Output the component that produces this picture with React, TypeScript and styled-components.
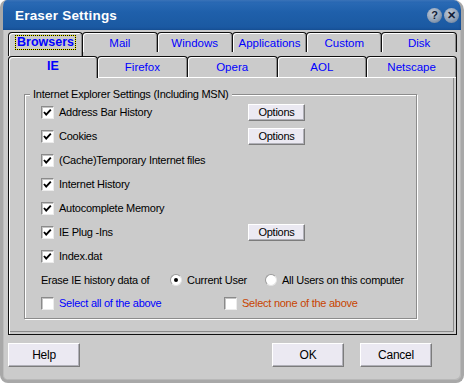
import React from "react";
import styled, { createGlobalStyle } from "styled-components";

const GlobalStyle = createGlobalStyle`
  html, body {
    margin: 0;
    padding: 0;
    background: #ffffff;
  }
  body {
    font-family: "Liberation Sans", Arial, sans-serif;
    font-size: 11px;
    letter-spacing: -0.25px;
    color: #000;
  }
`;

const outerTabs = ["Browsers", "Mail", "Windows", "Applications", "Custom", "Disk"];
const innerTabs = ["IE", "Firefox", "Opera", "AOL", "Netscape"];

const items = [
  { label: "Address Bar History", options: true },
  { label: "Cookies", options: true },
  { label: "(Cache)Temporary Internet files", options: false },
  { label: "Internet History", options: false },
  { label: "Autocomplete Memory", options: false },
  { label: "IE Plug -Ins", options: true },
  { label: "Index.dat", options: false },
];

function CheckBox({ checked }: { checked: boolean }) {
  return (
    <Box>
      {checked && (
        <svg width="11" height="11" viewBox="0 0 11 11">
          <polyline
            points="2,5 4.2,7.6 8.8,2.6"
            fill="none"
            stroke="#000"
            strokeWidth="1.9"
          />
        </svg>
      )}
    </Box>
  );
}

export default function App() {
  return (
    <>
      <GlobalStyle />
      <Window>
        <TitleBar>
          <Title>Eraser Settings</Title>
          <TitleButtons>
            <RoundButton>?</RoundButton>
            <RoundButton>✕</RoundButton>
          </TitleButtons>
        </TitleBar>

        <Body>
          <TabRow>
            {outerTabs.map((t, i) => (
              <Tab key={t} $active={i === 0} $back>
                {i === 0 ? <Focus>{t}</Focus> : t}
              </Tab>
            ))}
          </TabRow>

          <TabRow $front>
            {innerTabs.map((t, i) => (
              <Tab key={t} $active={i === 0}>
                {t}
              </Tab>
            ))}
          </TabRow>

          <Panel>
            <Group>
              <Legend>Internet Explorer Settings (Including MSN)</Legend>
              {items.map((it) => (
                <ItemRow key={it.label}>
                  <CheckLabel>
                    <CheckBox checked />
                    <span>{it.label}</span>
                  </CheckLabel>
                  {it.options && <SmallButton>Options</SmallButton>}
                </ItemRow>
              ))}

              <EraseRow>
                <EraseLabel>Erase IE history data of</EraseLabel>
                <RadioOption $width={95}>
                  <Radio $on />
                  <span>Current User</span>
                </RadioOption>
                <RadioOption>
                  <Radio />
                  <span>All Users on this computer</span>
                </RadioOption>
              </EraseRow>

              <SelectRow>
                <SelectOption $color="#0000ff" $width={183}>
                  <CheckBox checked={false} />
                  <span>Select all of the above</span>
                </SelectOption>
                <SelectOption $color="#c84400">
                  <CheckBox checked={false} />
                  <span>Select none of the above</span>
                </SelectOption>
              </SelectRow>
            </Group>
          </Panel>

          <ButtonRow>
            <DialogButton>Help</DialogButton>
            <Spacer />
            <DialogButton>OK</DialogButton>
            <DialogButton>Cancel</DialogButton>
          </ButtonRow>
        </Body>
      </Window>
    </>
  );
}

const Window = styled.div`
  width: 464px;
  height: 383px;
  box-sizing: border-box;
  display: flex;
  flex-direction: column;
  background: #cbcbcb;
  border-radius: 7px 10px 8px 8px;
  overflow: hidden;
  border: 3px solid #a8a8a8;
  border-top: none;
  box-shadow: inset 1px 0 0 #bdbdbd, inset -1px -1px 0 #b8b8b8;
`;

const TitleBar = styled.div`
  height: 30px;
  flex-shrink: 0;
  margin: 0 -3px;
  padding: 0 5px 0 15px;
  display: flex;
  align-items: center;
  justify-content: space-between;
  background: linear-gradient(
    to bottom,
    #4584cc 0px,
    #2a6ab5 2px,
    #1f60ab 40%,
    #1a58a0 100%
  );
  box-shadow: inset -3px 0 3px rgba(0, 30, 80, 0.35);
`;

const Title = styled.div`
  color: #ffffff;
  font-family: "Liberation Sans", Arial, sans-serif;
  font-weight: 700;
  font-size: 13.5px;
  letter-spacing: 0.2px;
  padding-top: 1px;
`;

const TitleButtons = styled.div`
  display: flex;
  gap: 2px;
`;

const RoundButton = styled.div`
  width: 15px;
  height: 15px;
  border-radius: 50%;
  display: flex;
  align-items: center;
  justify-content: center;
  background: radial-gradient(circle at 40% 35%, #c4cedb 0%, #8b9db4 60%, #5b6f8a 100%);
  color: #122036;
  font-weight: 700;
  font-size: 11px;
  letter-spacing: 0;
  line-height: 1;
`;

const Body = styled.div`
  flex: 1;
  display: flex;
  flex-direction: column;
  padding: 2px 4px 0 5px;
`;

const TabRow = styled.div<{ $front?: boolean }>`
  display: flex;
  height: ${(p) => (p.$front ? 21 : 20)}px;
  margin-top: ${(p) => (p.$front ? 4 : 0)}px;
  position: relative;
  box-shadow: ${(p) => (p.$front ? "none" : "inset 0 -1px 0 #ffffff")};
  z-index: ${(p) => (p.$front ? 2 : 1)};
`;

const Tab = styled.div<{ $active?: boolean; $back?: boolean }>`
  flex: 1;
  box-sizing: border-box;
  margin-left: -1px;
  &:first-child {
    margin-left: 0;
  }
  height: ${(p) => (p.$active ? (p.$back ? 24 : 22) : p.$back ? 20 : 21)}px;
  display: flex;
  align-items: ${(p) => (p.$active ? "flex-start" : "center")};
  padding-top: ${(p) => (p.$active ? (p.$back ? 3 : 2) : 0)}px;
  justify-content: center;
  background: #cbcbcb;
  border: 1px solid #101010;
  border-bottom: none;
  border-radius: 4px 4px 0 0;
  box-shadow: inset 1px 1px 0 #ffffff, inset -1px 0 0 #8c8c8c;
  color: #0000ff;
  font-family: "Liberation Sans", Arial, sans-serif;
  font-size: ${(p) => (p.$active ? 12.5 : 11.5)}px;
  font-weight: ${(p) => (p.$active ? 700 : 400)};
  letter-spacing: 0;
  position: relative;
  z-index: ${(p) => (p.$active ? 3 : 1)};
  ${(p) => (p.$active && !p.$back ? "flex: 0 0 90px;" : "")}
  ${(p) => (p.$active && p.$back ? "flex: 0 0 75px;" : "")}
`;

const Focus = styled.span`
  outline: 1px dotted #000;
  box-shadow: 0 0 0 1px #f4f000;
  padding: 0 1px;
  line-height: 13px;
`;

const Panel = styled.div`
  height: 259px;
  box-sizing: border-box;
  border: 1px solid #101010;
  border-top-color: #ffffff;
  margin-top: -1px;
  box-shadow: inset 1px 1px 0 #ffffff, inset -2px -2px 0 #cbcbcb,
    inset -3px -3px 0 #8a8a8a;
  padding: 17px 0 0 15px;
  position: relative;
  z-index: 1;
`;

const Group = styled.div`
  width: 393px;
  height: 225px;
  box-sizing: border-box;
  border: 1px solid #8c8c8c;
  box-shadow: 1px 1px 0 #ffffff, inset 1px 1px 0 #ffffff;
  padding: 5px 0 0 16px;
  display: flex;
  flex-direction: column;
  position: relative;
`;

const Legend = styled.div`
  position: absolute;
  left: 5px;
  top: -7px;
  padding: 0 3px;
  background: #cbcbcb;
  font-size: 11px;
  line-height: 13px;
`;

const ItemRow = styled.div`
  height: 24px;
  display: flex;
  align-items: center;
`;

const CheckLabel = styled.div`
  width: 207px;
  display: flex;
  align-items: center;
  gap: 5px;
`;

const Box = styled.div`
  width: 13px;
  height: 13px;
  box-sizing: border-box;
  flex-shrink: 0;
  background: #ffffff;
  border: 1px solid;
  border-color: #8a8a8a #ececec #ececec #8a8a8a;
  box-shadow: inset 1px 1px 0 #c4c4c4;
  display: flex;
  align-items: center;
  justify-content: center;
`;

const SmallButton = styled.div`
  width: 57px;
  height: 17px;
  box-sizing: border-box;
  display: flex;
  align-items: center;
  justify-content: center;
  background: #ebe9f2;
  border: 1px solid;
  border-color: #ffffff #7c7c7c #7c7c7c #ffffff;
  box-shadow: inset -1px -1px 0 #b0b0b8;
  font-size: 11px;
`;

const EraseRow = styled.div`
  height: 23px;
  display: flex;
  align-items: center;
`;

const EraseLabel = styled.div`
  width: 129px;
`;

const RadioOption = styled.div<{ $width?: number }>`
  display: flex;
  align-items: center;
  gap: 5px;
  width: ${(p) => (p.$width ? `${p.$width}px` : "auto")};
`;

const Radio = styled.div<{ $on?: boolean }>`
  width: 12px;
  height: 12px;
  box-sizing: border-box;
  border-radius: 50%;
  background: #ffffff;
  border: 1px solid;
  border-color: #9a9a9a #e4e4e4 #e4e4e4 #9a9a9a;
  display: flex;
  align-items: center;
  justify-content: center;
  &::after {
    content: "";
    display: ${(p) => (p.$on ? "block" : "none")};
    width: 4px;
    height: 4px;
    border-radius: 50%;
    background: #000;
  }
`;

const SelectRow = styled.div`
  height: 24px;
  display: flex;
  align-items: center;
`;

const SelectOption = styled.div<{ $color: string; $width?: number }>`
  display: flex;
  align-items: center;
  gap: 5px;
  color: ${(p) => p.$color};
  width: ${(p) => (p.$width ? `${p.$width}px` : "auto")};
`;

const ButtonRow = styled.div`
  display: flex;
  margin-top: 8px;
  padding-right: 25px;
  gap: 16px;
`;

const Spacer = styled.div`
  flex: 1;
`;

const DialogButton = styled.div`
  width: 72px;
  height: 24px;
  box-sizing: border-box;
  display: flex;
  align-items: center;
  justify-content: center;
  background: #ebe9f2;
  border: 1px solid;
  border-color: #ffffff #7c7c7c #7c7c7c #ffffff;
  box-shadow: inset -1px -1px 0 #b0b0b8;
  font-size: 12px;
`;
